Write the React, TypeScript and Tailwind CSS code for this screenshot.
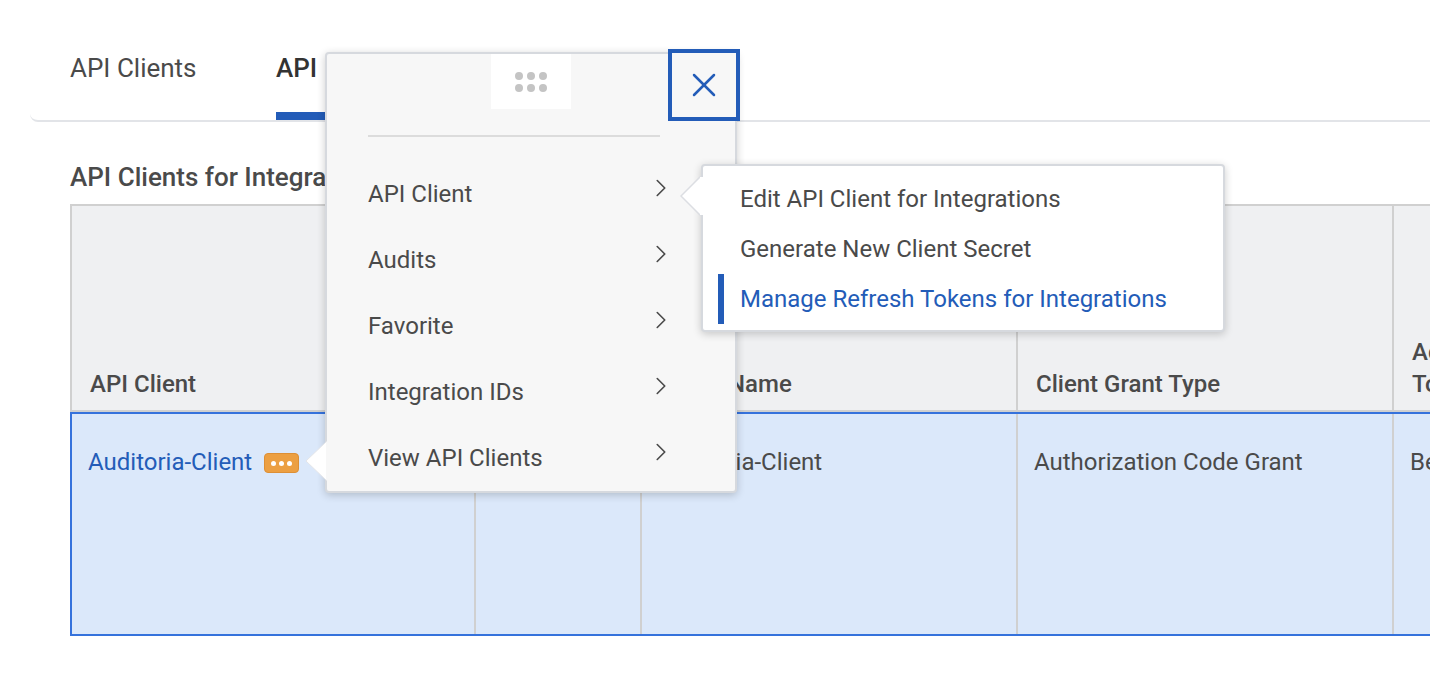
import { ChevronRight, X } from "lucide-react";

const menuItems = ["API Client", "Audits", "Favorite", "Integration IDs", "View API Clients"];

const headers = [
  { label: "API Client", className: "pl-[18px]" },
  { label: "", className: "pl-[18px]" },
  { label: "Client Name", className: "pl-[18px]" },
  { label: "Client Grant Type", className: "pl-[18px]" },
  { label: "Access Token Type", className: "pl-[18px] w-[155px]" },
];

function ActionMenu() {
  return (
    <div className="absolute left-[325px] top-[52px] z-20 h-[441px] w-[412px] rounded-[4px] border-2 border-[#d6d9de] bg-[#f7f7f7] shadow-[0_2px_8px_rgba(0,0,0,0.2)]">
      <div className="mx-auto flex h-[55px] w-[80px] flex-col items-center justify-center gap-[4px] bg-white">
        <div className="flex gap-[4px]">
          <span className="h-[8px] w-[8px] rounded-full bg-[#c4c4c4]" />
          <span className="h-[8px] w-[8px] rounded-full bg-[#c4c4c4]" />
          <span className="h-[8px] w-[8px] rounded-full bg-[#c4c4c4]" />
        </div>
        <div className="flex gap-[4px]">
          <span className="h-[8px] w-[8px] rounded-full bg-[#c4c4c4]" />
          <span className="h-[8px] w-[8px] rounded-full bg-[#c4c4c4]" />
          <span className="h-[8px] w-[8px] rounded-full bg-[#c4c4c4]" />
        </div>
      </div>
      <div className="ml-[41px] mt-[26px] h-[2px] w-[292px] bg-[#dcdcdc]" />
      <div className="mt-[24px] pl-[41px]">
        {menuItems.map((item) => (
          <div key={item} className="relative flex h-[66px] items-center text-[24px] text-[#4a4a4a]">
            {item}
            <ChevronRight
              size={30}
              strokeWidth={1.3}
              className="absolute left-[278px] top-[12px] text-[#4a4a4a]"
            />
          </div>
        ))}
      </div>
      <svg className="absolute left-[-22px] top-[387px]" width="24" height="40" viewBox="0 0 24 40">
        <path d="M22 0 L1 20 L22 40" fill="#ffffff" stroke="#e4e5e8" strokeWidth="1" />
        <rect x="21" y="1" width="3" height="38" fill="#f7f7f7" />
      </svg>
    </div>
  );
}

function SubMenu() {
  return (
    <div className="absolute left-[701px] top-[164px] z-30 h-[168px] w-[524px] rounded-[4px] border-2 border-[#d6d9de] bg-white shadow-[0_2px_8px_rgba(0,0,0,0.2)]">
      <svg className="absolute left-[-23px] top-[10px]" width="24" height="40" viewBox="0 0 24 40">
        <path d="M21 0 L1 20 L21 40" fill="#ffffff" stroke="#dcdee2" strokeWidth="1.5" />
        <rect x="20" y="1" width="4" height="38" fill="#ffffff" />
      </svg>
      <div className="pt-[8px]">
        <div className="flex h-[50px] items-center pl-[37px] text-[24px] text-[#4a4a4a]">Edit API Client for Integrations</div>
        <div className="flex h-[50px] items-center pl-[37px] text-[24px] text-[#4a4a4a]">Generate New Client Secret</div>
        <div className="relative flex h-[50px] items-center pl-[37px] text-[24px] text-[#235cb8]">
          <span className="absolute left-[15px] top-0 h-[50px] w-[6px] bg-[#235cb8]" />
          Manage Refresh Tokens for Integrations
        </div>
      </div>
    </div>
  );
}

export default function App() {
  return (
    <div className="relative h-[688px] w-[1430px] overflow-hidden bg-white font-['Roboto',sans-serif]">
      <div className="pl-[30px] pt-[48px]">
        <div className="flex h-[74px] rounded-bl-[8px] border-b-2 border-[#e2e4e8] pl-[40px]">
          <div className="w-[206px] pt-[3px] text-[26px] leading-[34px] text-[#4a4a4a]">API Clients</div>
          <div className="h-[72px] w-[300px] whitespace-nowrap border-b-[8px] border-[#235cb8] pt-[3px] text-[26px] font-medium leading-[34px] text-[#333333]">
            API
          </div>
        </div>
      </div>

      <div className="pl-[70px]">
        <h2 className="mt-[38px] h-[44px] text-[26px] font-medium leading-[34px] text-[#4a4a4a]">
          API Clients for Integrations
        </h2>
        <div className="w-[1700px]">
          <div className="grid h-[208px] grid-cols-[402px_166px_376px_376px_1fr] border-y-2 border-l-2 border-[#d0d0d0] bg-[#eff0f2]">
            {headers.map((h, i) => (
              <div
                key={i}
                className={`flex items-end pb-[10px] text-[24px] font-medium leading-[32px] text-[#4a4a4a] ${i > 0 ? "border-l-2 border-[#d0d0d0]" : ""}`}
              >
                <div className={h.className}>{h.label}</div>
              </div>
            ))}
          </div>
          <div className="grid h-[224px] grid-cols-[402px_166px_376px_376px_1fr] border-2 border-[#3572dc] bg-[#dbe8fa] text-[24px] leading-[34px] text-[#4a4a4a]">
            <div className="flex items-start pl-[16px] pt-[31px]">
              <span className="text-[#235cb8]">Auditoria-Client</span>
              <span className="ml-[12px] mt-[8px] flex h-[20px] w-[35px] items-center justify-center gap-[3px] rounded-[4px] border border-[#dd8f35] bg-[#ec9f42]">
                <span className="h-[5px] w-[5px] rounded-full bg-white" />
                <span className="h-[5px] w-[5px] rounded-full bg-white" />
                <span className="h-[5px] w-[5px] rounded-full bg-white" />
              </span>
            </div>
            <div className="border-l-2 border-[#d0d0d0]" />
            <div className="border-l-2 border-[#d0d0d0] pl-[16px] pt-[31px]">Auditoria-Client</div>
            <div className="border-l-2 border-[#d0d0d0] pl-[16px] pt-[31px]">Authorization Code Grant</div>
            <div className="border-l-2 border-[#d0d0d0] pl-[16px] pt-[31px]">Bearer</div>
          </div>
        </div>
      </div>

      <ActionMenu />
      <button className="absolute left-[668px] top-[49px] z-30 flex h-[72px] w-[72px] items-center justify-center border-[4px] border-[#235cb8] bg-[#f7f7f7]">
        <X size={40} strokeWidth={1.5} className="text-[#235cb8]" />
      </button>
      <SubMenu />
    </div>
  );
}
